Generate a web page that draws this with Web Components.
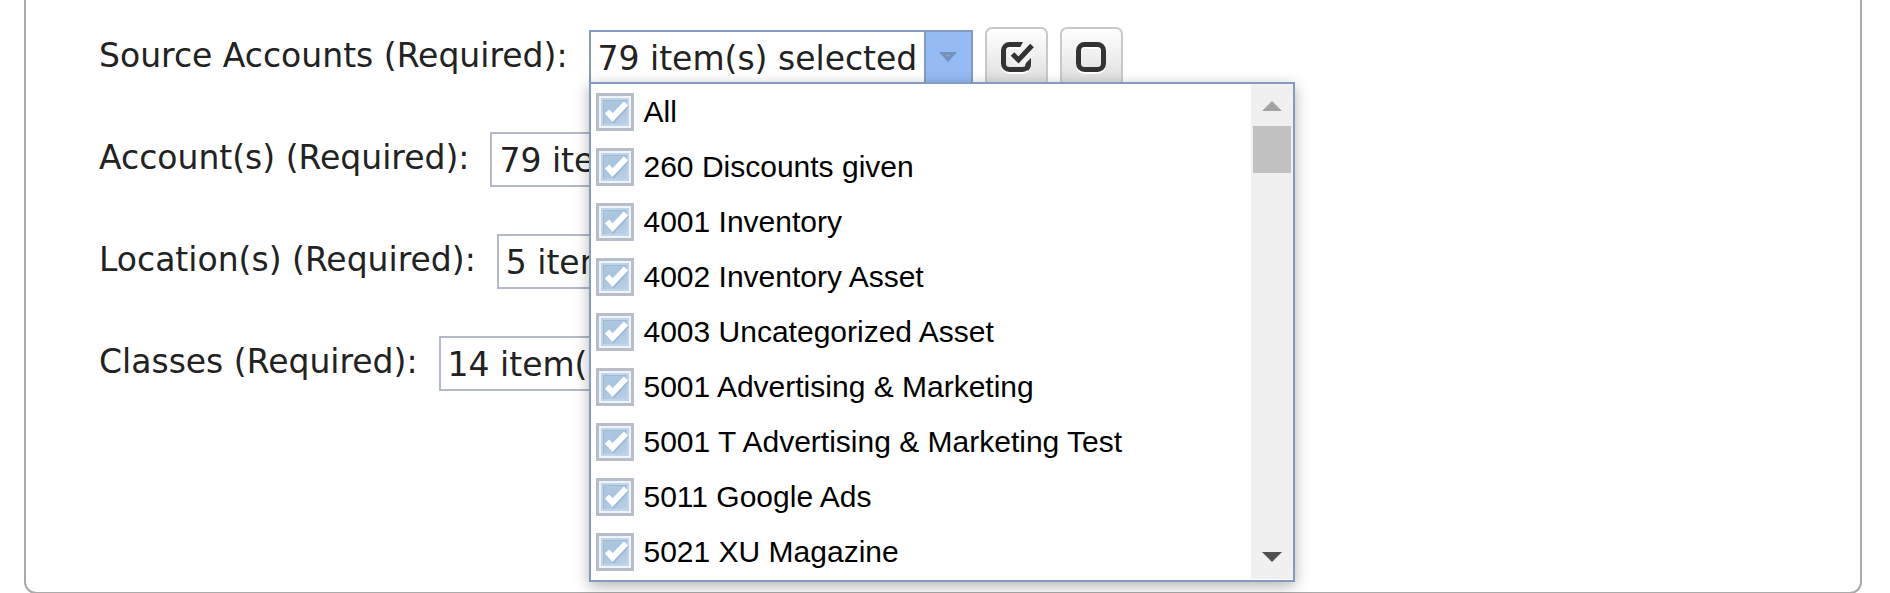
<!DOCTYPE html>
<html lang="en">
<head>
<meta charset="utf-8">
<title>Account filters</title>
<style>
  html, body { margin: 0; background: #fff; overflow: hidden; }
  body { font-family: "DejaVu Sans", Verdana, sans-serif; font-size: 33px; color: #222; }
</style>
</head>
<body>
<filter-panel>
  <filter-row label="Source Accounts (Required):">
    <combo-box value="79 item(s) selected" label="Source Accounts" open>
      <check-item>All</check-item>
      <check-item>260 Discounts given</check-item>
      <check-item>4001 Inventory</check-item>
      <check-item>4002 Inventory Asset</check-item>
      <check-item>4003 Uncategorized Asset</check-item>
      <check-item>5001 Advertising &amp; Marketing</check-item>
      <check-item>5001 T Advertising &amp; Marketing Test</check-item>
      <check-item>5011 Google Ads</check-item>
      <check-item>5021 XU Magazine</check-item>
    </combo-box>
    <tool-button slot="tools" label="Select all">
      <svg width="34" height="34" viewBox="0 0 34 34" fill="none">
        <rect x="3.5" y="5.5" width="25" height="25" rx="6" stroke="#fff" stroke-width="5"/>
        <rect x="3.5" y="3.5" width="25" height="25" rx="6" stroke="#333" stroke-width="5"/>
        <path d="M23.500 0H34V14L26 22L18 26L7 15L12 10L17 12Z" fill="#f3f3f3"/>
        <path d="M31 17.500V23Q31 27 28 30L25.500 26V23Z" fill="#333"/>
        <path d="M12.500 13L18.500 19L32 4.500" stroke="#333" stroke-width="5"/>
      </svg>
    </tool-button>
    <tool-button slot="tools" label="Clear selection">
      <svg width="34" height="34" viewBox="0 0 34 34" fill="none">
        <rect x="3.5" y="5.5" width="25" height="25" rx="6" stroke="#fff" stroke-width="5"/>
        <rect x="3.5" y="3.5" width="25" height="25" rx="6" stroke="#333" stroke-width="5"/>
      </svg>
    </tool-button>
  </filter-row>
  <filter-row label="Account(s) (Required):"><combo-box value="79 item(s) selected" label="Accounts"></combo-box></filter-row>
  <filter-row label="Location(s) (Required):"><combo-box value="5 item(s) selected" label="Locations"></combo-box></filter-row>
  <filter-row label="Classes (Required):"><combo-box value="14 item(s) selected" label="Classes"></combo-box></filter-row>
</filter-panel>

<script>
  class FilterPanel extends HTMLElement {
    constructor() {
      super();
      this.attachShadow({ mode: "open" }).innerHTML = `
        <style>
          :host { display: flex; flex-direction: column; gap: 47px; box-sizing: border-box;
            margin: 0 28px 0 24px; padding: 30px 73px 201px; border: 2px solid #aaa;
            border-top: 0; border-radius: 0 0 12px 12px; }
        </style>
        <slot></slot>`;
    }
  }

  class FilterRow extends HTMLElement {
    constructor() {
      super();
      this.attachShadow({ mode: "open" }).innerHTML = `
        <style>
          :host { display: flex; align-items: center; height: 55px; }
          .label { margin-right: 21px; padding-bottom: 4px; white-space: nowrap; line-height: 40px; }
          .tools { display: flex; gap: 12px; margin-left: 12px; }
        </style>
        <span class="label"></span><slot></slot><div class="tools"><slot name="tools"></slot></div>`;
    }
    connectedCallback() {
      this.shadowRoot.querySelector(".label").textContent = this.getAttribute("label");
    }
  }

  class ComboBox extends HTMLElement {
    constructor() {
      super();
      this.attachShadow({ mode: "open" }).innerHTML = `
        <style>
          :host { display: block; position: relative; --line: #b4b9c8; --arrow: #fff; }
          :host([open]) { --line: #819cc0; --arrow: #94bbf4; z-index: 2; }
          .box { display: flex; box-sizing: border-box; width: 384px; height: 55px;
            border: 2px solid var(--line); background: #fff; }
          input { flex: 1; min-width: 0; box-sizing: border-box; border: 0; margin: 0; padding: 2px 0 0 7px;
            background: none; font: inherit; color: inherit; outline: 0; }
          .arrow { flex: none; width: 47px; padding: 0 0 2px; border: 0; border-left: 2px solid var(--line);
            background: var(--arrow); display: grid; place-items: center; }
          .menu { display: none; position: absolute; top: 52px; left: 0; box-sizing: border-box; width: 706px;
            height: 500px; border: 2px solid #819cc0; background: #fff;
            box-shadow: 0 4px 14px rgba(0,0,0,.3); color: #000;
            font-family: "Liberation Sans", Arial, sans-serif; font-size: 30px; }
          :host([open]) .menu { display: flex; }
          .list { flex: 1; padding-left: 5px; }
          .bar { width: 42px; margin-bottom: 1px; background: #f0f0f0; display: flex;
            flex-direction: column; align-items: center; }
          .bar svg { display: block; flex: none; }
          .thumb { width: 38px; height: 47px; background: #c1c1c1; margin-bottom: auto; }
        </style>
        <div class="box">
          <input type="text" readonly>
          <button class="arrow" type="button" aria-label="Toggle list">
            <svg width="20" height="12" viewBox="0 0 20 12"><path d="M1 1H19L10 11Z" fill="#7591ba"/><path d="M8 4H12L10 6Z" fill="#94add0"/></svg>
          </button>
        </div>
        <div class="menu">
          <div class="list"><slot></slot></div>
          <div class="bar">
            <svg width="42" height="42"><path d="M11 27L21 17L31 27Z" fill="#a3a3a3"/></svg>
            <div class="thumb"></div>
            <svg width="42" height="42"><path d="M11 15H31L21 25Z" fill="#505050"/></svg>
          </div>
        </div>`;
    }
    connectedCallback() {
      const input = this.shadowRoot.querySelector("input");
      input.value = this.getAttribute("value");
      input.setAttribute("aria-label", this.getAttribute("label"));
    }
  }

  class CheckItem extends HTMLElement {
    constructor() {
      super();
      this.attachShadow({ mode: "open" }).innerHTML = `
        <style>
          :host { display: block; }
          label { display: flex; align-items: center; height: 55px; gap: 10px; white-space: nowrap; }
          .tick { display: grid; width: 38px; height: 38px; }
          .tick > * { grid-area: 1 / 1; }
          input { appearance: none; box-sizing: border-box; width: 38px; height: 38px; margin: 0;
            border: 3px solid #b8bdca; padding: 2px; background:
              linear-gradient(155deg, #b1cae2, #a9c4df 45%, #bdd3e8) content-box,
              #f0f3f7; }
          svg { pointer-events: none; }
        </style>
        <label>
          <span class="tick">
            <input type="checkbox" checked>
            <svg width="38" height="38" viewBox="0 0 38 38" fill="none">
              <rect x="6" y="6" width="26" height="26" stroke="#bfd5e9" stroke-width="2"/>
              <path d="M7.500 31V7.500H31" stroke="#9dbad6" stroke-width="1"/>
              <path d="M12 21L17.500 27L31 12" stroke="#8ba9c8" stroke-width="5" opacity=".6"/>
              <path d="M11 18.500L16.500 24.500L30 10.500" stroke="#fff" stroke-width="6"/>
            </svg>
          </span>
          <span><slot></slot></span>
        </label>`;
    }
  }

  class ToolButton extends HTMLElement {
    constructor() {
      super();
      this.attachShadow({ mode: "open" }).innerHTML = `
        <style>
          :host { display: block; }
          button { box-sizing: border-box; width: 63px; height: 61px; margin: 0; padding: 0 0 0 1px;
            border: 2px solid #c8c8c8; border-radius: 7px; display: grid; place-items: center;
            background: linear-gradient(#fff, #dcdcdc); }
        </style>
        <button type="button"><slot></slot></button>`;
    }
    connectedCallback() {
      this.shadowRoot.querySelector("button").setAttribute("aria-label", this.getAttribute("label"));
    }
  }

  customElements.define("filter-panel", FilterPanel);
  customElements.define("filter-row", FilterRow);
  customElements.define("combo-box", ComboBox);
  customElements.define("check-item", CheckItem);
  customElements.define("tool-button", ToolButton);
</script>
</body>
</html>
